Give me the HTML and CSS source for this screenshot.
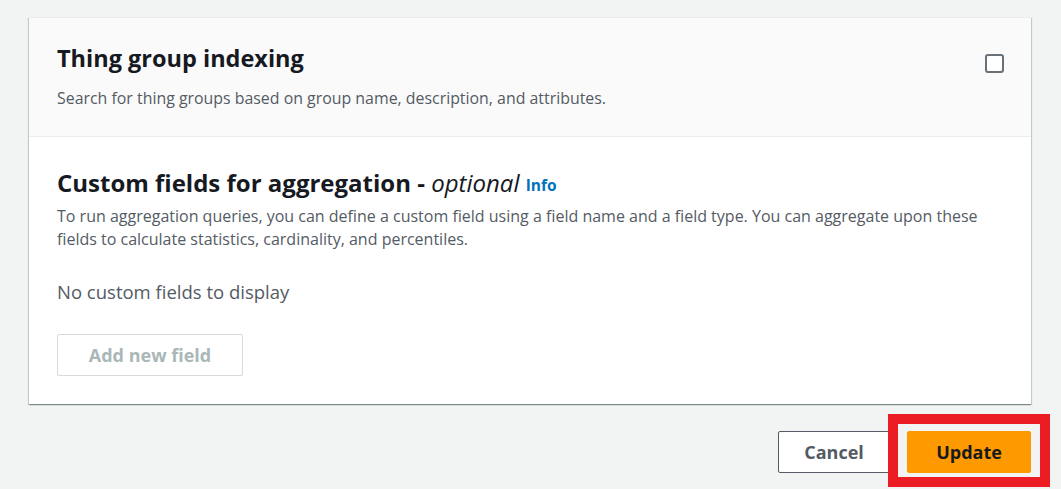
FILE: index.html
```html
<!DOCTYPE html>
<html lang="en">

<head>
    <meta charset="UTF-8">
    <meta name="viewport" content="width=device-width, initial-scale=1.0">
    <link rel="stylesheet" href="styles.css">
    <title>Thing group indexing</title>
</head>

<body>
    <div class="page">
        <div class="card">
            <div class="card-header">
                <div class="header-text">
                    <h2>Thing group indexing</h2>
                    <p>Search for thing groups based on group name, description, and attributes.</p>
                </div>
                <input type="checkbox" class="toggle">
            </div>
            <div class="card-body">
                <h3>Custom fields for aggregation - <em>optional</em> <a href="#" class="info">Info</a></h3>
                <p class="hint">To run aggregation queries, you can define a custom field using a field name and a field type. You can aggregate upon these fields to calculate statistics, cardinality, and percentiles.</p>
                <p class="empty">No custom fields to display</p>
                <button class="btn-add" disabled>Add new field</button>
            </div>
        </div>

        <div class="actions">
            <button class="btn-cancel">Cancel</button>
            <button class="btn-update">Update</button>
            <div class="highlight"></div>
        </div>
    </div>
</body>

</html>
```

FILE: styles.css
```css
body {
    font-family: 'Open Sans', 'Noto Sans', sans-serif;
    background-color: #f2f3f3;
    margin: 0;
    padding: 0;
    color: #16191f;
    height: 489px;
    overflow: hidden;
}

.page {
    padding: 17px 30px 0 29px;
}

.card {
    background-color: #fff;
    box-shadow: 0 1px 1px 0 rgba(0, 28, 36, 0.3), 1px 1px 1px 0 rgba(0, 28, 36, 0.15), -1px 1px 1px 0 rgba(0, 28, 36, 0.15);
    border-top: 1px solid #eaeded;
}

.card-header {
    background-color: #fafafa;
    border-bottom: 1px solid #eaeded;
    display: flex;
    justify-content: space-between;
    align-items: flex-start;
    padding: 25px 27px 0 28px;
    height: 93px;
}

.card-header h2 {
    font-size: 23.5px;
    font-weight: 700;
    margin: 0;
    line-height: 30px;
}

.card-header p {
    font-size: 15.9px;
    color: #545b64;
    margin: 14px 0 0;
}

.toggle {
    appearance: none;
    width: 19px;
    height: 19px;
    border: 2px solid #687078;
    border-radius: 3px;
    background: #fff;
    margin: 11px 0 0;
}

.card-body {
    padding: 31px 28px 28px 28px;
}

.card-body h3 {
    font-size: 24px;
    font-weight: 700;
    margin: 0;
    line-height: 30px;
}

.card-body h3 em {
    font-weight: 400;
}

.info {
    font-size: 15.5px;
    font-weight: 700;
    color: #0073bb;
    text-decoration: none;
    vertical-align: 1px;
}

.hint {
    font-size: 16px;
    line-height: 23px;
    color: #545b64;
    margin: 5px 0 0;
}

.empty {
    font-size: 18.5px;
    color: #545b64;
    margin: 28px 0 0;
}

.btn-add {
    margin-top: 30px;
    width: 186px;
    height: 42px;
    font-family: inherit;
    font-size: 18px;
    font-weight: 700;
    color: #aab7b8;
    background: #fff;
    border: 1px solid #d5dbdb;
    border-radius: 2px;
}

.actions {
    position: relative;
    display: flex;
    justify-content: flex-end;
    gap: 17px;
    margin-top: 27px;
}

.actions button {
    height: 42px;
    font-family: inherit;
    font-size: 18px;
    font-weight: 700;
    border-radius: 2px;
}

.btn-cancel {
    width: 112px;
    background: #fff;
    color: #545b64;
    border: 1px solid #545b64;
}

.btn-update {
    width: 124px;
    background: #ff9900;
    color: #16191f;
    border: 1px solid #ff9900;
}

.highlight {
    position: absolute;
    right: -19px;
    top: -17px;
    bottom: -14px;
    width: 142px;
    border: 10px solid #ec1c24;
}
```
